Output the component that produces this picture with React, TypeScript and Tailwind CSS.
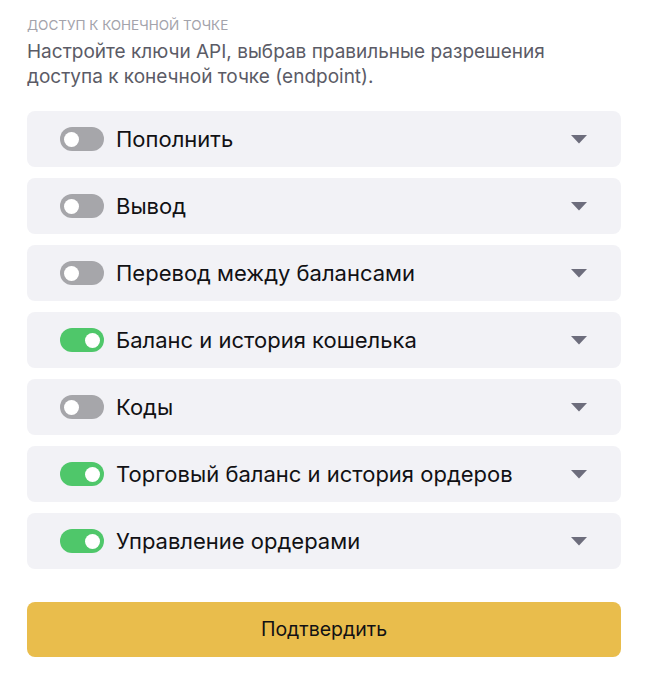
const items = [
  { label: "Пополнить", on: false },
  { label: "Вывод", on: false },
  { label: "Перевод между балансами", on: false },
  { label: "Баланс и история кошелька", on: true },
  { label: "Коды", on: false },
  { label: "Торговый баланс и история ордеров", on: true },
  { label: "Управление ордерами", on: true },
];

function Toggle({ on }: { on: boolean }) {
  return (
    <div
      className={`flex h-[24px] w-[44px] shrink-0 items-center rounded-full px-[4px] ${
        on ? "justify-end bg-[#4fc76a]" : "justify-start bg-[#a6a6aa]"
      }`}
    >
      <div className="h-[15px] w-[15px] rounded-full bg-white" />
    </div>
  );
}

export default function App() {
  return (
    <div className="min-h-screen bg-white px-[27px] pt-[14px] font-['Inter',sans-serif]">
      <div className="text-[13.5px] leading-[22px] uppercase text-[#a3a3ab]">Доступ к конечной точке</div>
      <p className="mt-[3px] w-[560px] text-[19px] leading-[25px] text-[#5b5b66]">
        Настройте ключи API, выбрав правильные разрешения доступа к конечной точке (endpoint).
      </p>

      <div className="mt-[22px] flex w-[594px] flex-col gap-[11px]">
        {items.map((it) => (
          <div
            key={it.label}
            className="flex h-[56px] items-center rounded-[8px] bg-[#f2f2f6] pl-[33px] pr-[34px]"
          >
            <Toggle on={it.on} />
            <span className="ml-[12px] flex-1 text-[22px] font-normal text-[#111114]">{it.label}</span>
            <svg width="16" height="9" viewBox="0 0 16 9">
              <path d="M0 0 H16 L8 8.5 Z" fill="#6d6d7c" />
            </svg>
          </div>
        ))}
      </div>

      <button className="mt-[33px] flex h-[55px] w-[594px] items-center justify-center rounded-[8px] bg-[#e9bd4c] text-[19.5px] text-[#111114]">
        Подтвердить
      </button>
    </div>
  );
}
